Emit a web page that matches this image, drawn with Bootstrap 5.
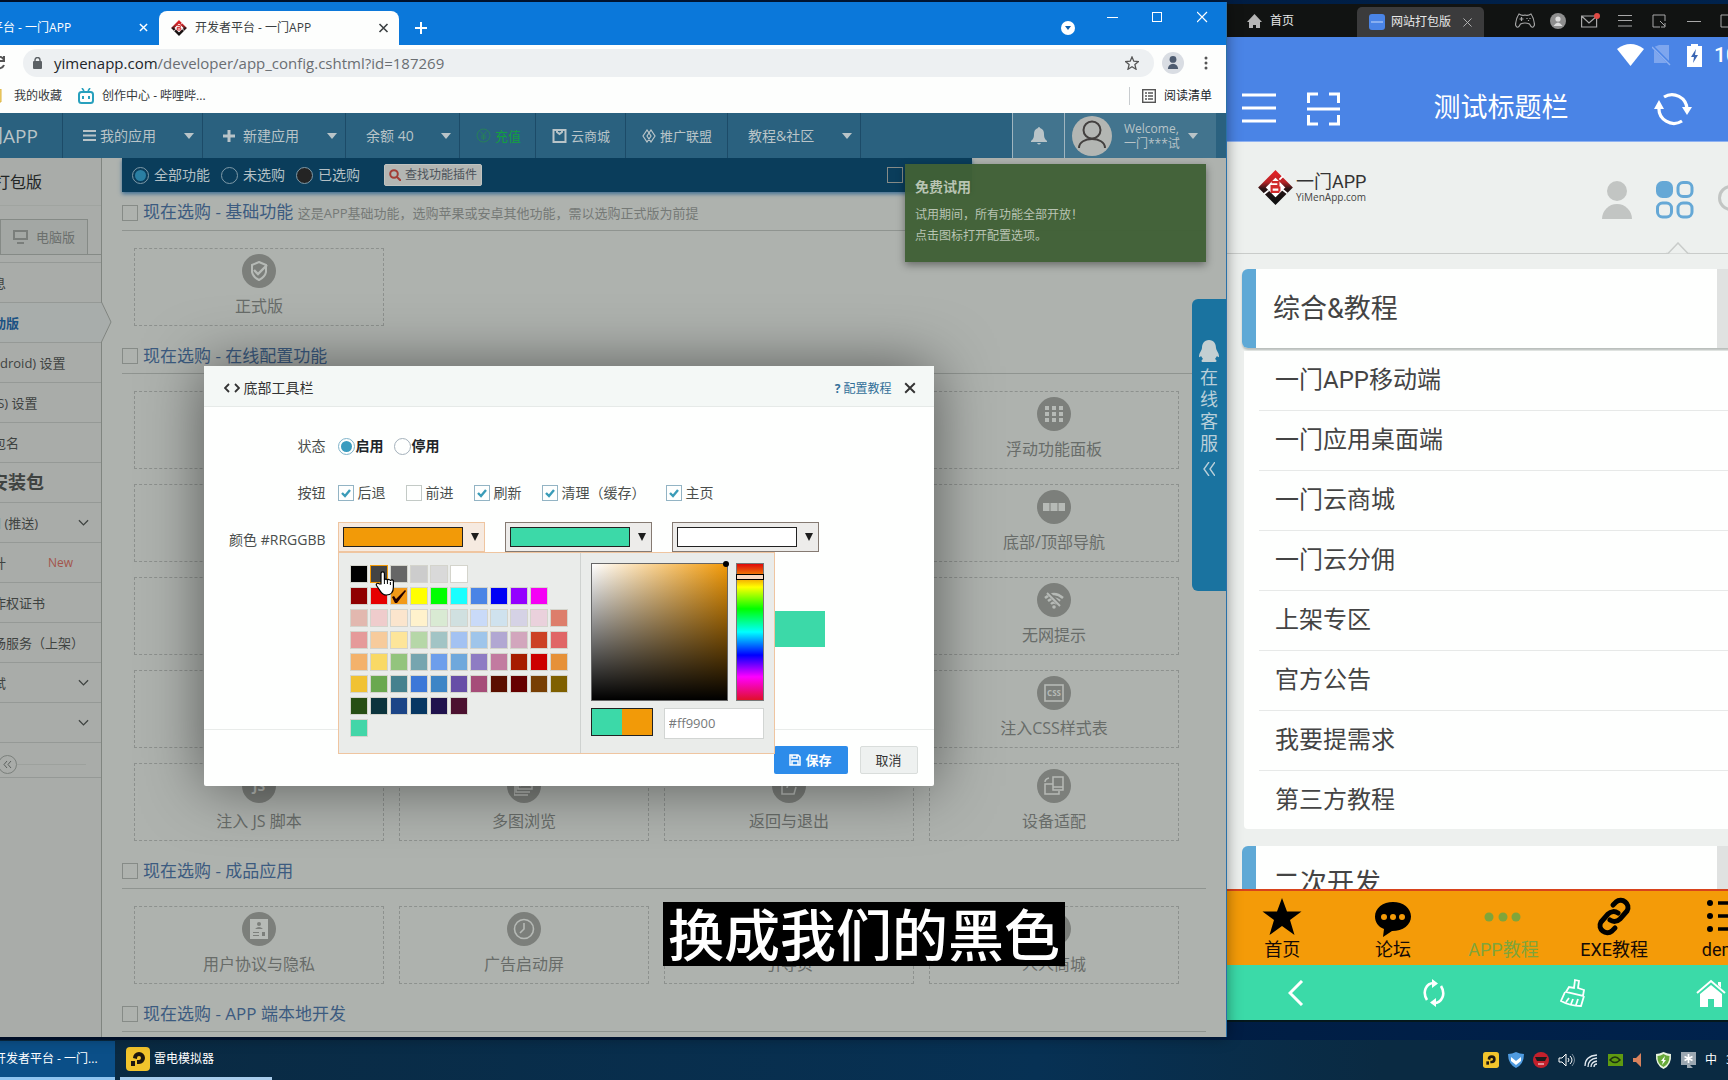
<!DOCTYPE html>
<html lang="zh-CN">
<head>
<meta charset="utf-8">
<meta name="viewport" content="width=device-width, initial-scale=1">
<title>开发者平台 - 一门APP</title>
<link rel="stylesheet" href="https://cdn.jsdelivr.net/npm/bootstrap@5.3.0/dist/css/bootstrap.min.css">
<style>
  :root { --ui: "Open Sans", "Noto Sans CJK SC", sans-serif; --phone: Roboto, "Noto Sans CJK SC", sans-serif; }
  body { font-family: var(--ui); font-size: 13px; line-height: 20px; background: #001b3c; overflow: hidden; height: 100vh; }
  button, input { font-family: inherit; }
  svg { display: block; flex: none; }
  a { text-decoration: none; color: inherit; }
  .desk { height: calc(100vh - 40px); padding: 2px 0 3px; background: linear-gradient(90deg, #001230, #00224c); }

  /* browser window */
  .win { position: relative; margin-left: -89px; box-shadow: 0 0 14px rgba(0,0,0,.4); z-index: 2; border-right: 1px solid #2a70a8; background: #fdfefd; min-width: 0; }
  .strip { height: 43px; background: #0b78da; padding-top: 9px; color: #fff; font-size: 12px; }
  .tab-old { width: 248px; padding: 0 11px 0 44px; }
  .tab-now { width: 240px; background: #fdfefd; color: #3a3f42; border-radius: 8px 8px 0 0; padding: 0 10px 0 12px; }
  .plain { border: 0; background: none; padding: 0; color: inherit; }
  .caps { align-self: flex-start; gap: 34px; padding: 0 18px 0 0; margin-top: -1px; }
  .addr-row { height: 35px; padding: 4px 14px 3px 84px; }
  .addr { background: #edf0f2; border-radius: 14px; height: 28px; padding: 0 15px 0 10px; gap: 12px; }
  .url { font-size: 15px; color: #6a6e72; border: 0; background: none; outline: 0; }
  .marks { height: 34px; font-size: 12px; color: #33373a; padding: 0 14px 0 79px; }
  .marks .read { border-left: 1px solid #c8cccf; padding-left: 12px; height: 18px; }

  .topnav { height: 45px; background: #2a617f; color: #b9c4c8; font-size: 14px; }
  .topnav > a, .topnav > .brand { border-right: 1px solid #1c4b68; height: 45px; }
  .brand { width: 152px; font-size: 19px; padding-left: 54px; }
  .caret { border: 5px solid transparent; border-top: 6px solid #b9c4c8; border-bottom: 0; }
  .sm13 { font-size: 13px; }
  .bell { width: 52px; background: #42748e; border-left: 1px solid #9fb5bf; }
  .user { width: 152px; background: #42748e; border-left: 1px solid #9fb5bf; padding-left: 7px; font-size: 12px; line-height: 15px; }

  .page { background: #aeb2ae; min-height: 0; overflow: hidden; }
  .side { width: 191px; background: #a9aca9; border-right: 1px solid #808580; color: #3f4341; flex: none; }
  .side-title { height: 48px; padding: 0 0 0 51px; font-size: 16px; color: #232625; border-bottom: 1px solid #a0a4a0; }
  .side-tabs { height: 49px; padding: 13px 13px 0 0; border-bottom: 1px solid #858a86; margin-bottom: 7px; }
  .side-tabs a { height: 35px; width: 88px; border: 1px solid #858a86; border-bottom: 0; font-size: 13px; color: #6b6f6d; background: #a3a7a4; }
  .side-list a, .side-list h6 { height: 40px; border-top: 1px solid #959996; padding: 0 12px 0 43px; margin: 0; white-space: nowrap; }
  .side-list h6 { font-size: 18px; font-weight: 700; }
  .side-list .on { position: relative; color: #1b5283; font-weight: 700; background: #a8adab; margin-right: -1px; }
  .side-list .on svg { position: absolute; right: -10px; top: -1px; }
  .fold { height: 36px; border-top: 1px solid #959996; border-bottom: 1px solid #959996; padding: 8px 15px 0 87px; }
  .fold hr { flex: 1; margin: 0; color: #7b807c; }
  .fold button { width: 19px; height: 19px; border: 1px solid #7b807c; border-radius: 50%; }

  .main { flex: 1; min-width: 0; padding: 0 20px; overflow: hidden; }
  .filter { height: 34px; background: #0a3d5b; margin-right: 234px; padding: 0 69px 0 10px; color: #b4c0c5; font-size: 14px; box-shadow: 0 2px 4px #3f6f94; }
  .dot { appearance: none; width: 17px; height: 17px; border: 1px solid #7f9aa8; border-radius: 50%; margin: 0 5px 0 0; padding: 0; background-clip: content-box; }
  .dot:checked { background-color: #2a7fa3; padding: 2px; }
  .dot.ink { background-color: #242424; background-clip: border-box; }
  .find { background: #b3b6b3; color: #4d535b; font-size: 12px; border: 1px solid #c0c3c0; border-radius: 2px; height: 22px; padding: 0 4px; }
  .sect-head { height: 27px; border-bottom: 1px solid #8f9490; font-size: 17px; color: #3c5b80; margin: 12px 0 17px; padding-bottom: 9px; }
  .sect-head small { font-size: 13px; color: #757976; }
  .box { appearance: none; width: 16px; height: 16px; border: 1px solid #868b87; margin: 0 5px 0 0; flex: none; }
  .tiles { display: grid; grid-template-columns: repeat(4, 1fr); gap: 15px; margin: 0 27px 21px 12px; }
  .tile { height: 78px; border: 1px dashed #8d918e; padding-top: 5px; font-size: 16px; line-height: 24px; color: #686c69; text-align: center; }
  .disc { width: 34px; height: 34px; border-radius: 50%; background: #7c7f7b; margin: 0 auto 6px; display: grid; place-items: center; color: #b6bab6; }

  .toast-green { position: absolute; right: 20px; top: 162px; width: 301px; height: 98px; background: rgba(64,96,54,.97); color: #b9c4b3; padding: 12px 10px; font-size: 12px; line-height: 21px; box-shadow: 0 3px 8px rgba(0,0,0,.4); }
  .toast-green b { font-size: 14px; display: block; margin-bottom: 7px; }
  .service { position: absolute; right: 0; top: 297px; width: 34px; height: 292px; background: #1a73a0; color: #b9cfd9; border-radius: 6px 0 0 6px; padding-top: 41px; font-size: 18px; line-height: 22px; }

  /* dialog */
  .dlg { position: absolute; left: 50%; margin-left: -365px; top: 364px; width: 730px; height: 420px; background: #fefffe; box-shadow: 0 0 60px rgba(0,0,0,.5); border-radius: 2px; color: #4a4e4c; font-size: 14px; }
  .dlg-head { height: 41px; background: #f4f8f6; border-bottom: 1px solid #e6eae8; padding: 3px 18px 0 20px; color: #333; }
  .help { font-size: 12px; color: #337099; padding-top: 2px; }
  .dlg-body { padding: 27px 0 0; flex: 1; }
  .frow { height: 24px; margin-bottom: 23px; }
  .frow.c { height: 30px; margin-bottom: 59px; margin-top: -6px; }
  .flabel { width: 122px; text-align: right; margin-right: 12px; flex: none; }
  .dlg .dot { border-color: #a4b1bb; margin-right: 1px; }
  .dlg .dot:checked { background-color: #3a9cbf; border-color: #7fb3ca; padding: 2px; }
  .dlg .box { border-color: #c3cac6; margin-right: 4px; }
  .dlg .box:checked { border-color: #93b4c4; background: url("data:image/svg+xml,%3Csvg xmlns='http://www.w3.org/2000/svg' viewBox='0 0 14 14'%3E%3Cpath d='M3 7l3 3 5-6' fill='none' stroke='%233a9cb8' stroke-width='2.4'/%3E%3C/svg%3E"); }
  .pick { width: 147px; height: 30px; border: 1px solid #857a72; background: #edecea; padding: 0 5px 0 4px; }
  .pick.open { border-color: #efc5a0; background: #f6eae0; }
  .pick i { width: 120px; height: 20px; border: 1px solid #222; }
  .pick u { border: 4px solid transparent; border-top: 8px solid #1d1d1d; border-bottom: 0; }
  .amber { background: #f29a08; } .mint { background: #3cd9a8; } .snow { background: #fff; }
  .strip-demo { height: 36px; width: 487px; margin-left: 134px; }
  .dlg-foot { height: 57px; border-top: 1px solid #e9ecea; padding: 4px 16px 0; }
  .dlg-foot .btn { font-size: 13px; height: 28px; padding: 0; border-radius: 2px; line-height: 18px; }
  .save { width: 74px; background: #2d8cea; color: #fff; font-weight: 600; }
  .cancel { width: 58px; background: #eef1f0; border: 1px solid #d9dddb; color: #333; }

  .pop { position: absolute; left: 134px; top: 186px; width: 437px; height: 202px; background: #eaecea; border: 1px solid #efc5a0; }
  .pal { width: 242px; padding: 12px 0 0 11px; border-right: 1px solid #cfd2d0; }
  .pal div { display: flex; gap: 2px; height: 18px; margin-bottom: 4px; }
  .pal button { width: 18px; height: 18px; border: 1px solid #d4d4cc; padding: 0; }
  .pal .hot { border-color: #f29a08; }
  .mix { padding: 10px; }
  .mix-foot { margin-top: 7px; }
  .sv { width: 137px; height: 138px; border: 1px solid #666; background: linear-gradient(to top, #000, transparent), linear-gradient(to right, #fff, #f29a08); position: relative; }
  .sv i { position: absolute; right: -2px; top: -3px; width: 6px; height: 6px; border-radius: 50%; background: #000; }
  .hue { width: 28px; height: 138px; border: 1px solid #777; position: relative; background: linear-gradient(#e00a0a, #ff0 17%, #0f0 33%, #0ff 50%, #00f 67%, #f0f 83%, #e0102a); }
  .hue i { position: absolute; left: -1px; top: 10px; width: 28px; height: 6px; background: #fbd9c0; border: 1px solid #000; }
  .duo { width: 62px; height: 28px; border: 1px solid #222; display: flex; }
  .duo i { flex: 1; }
  .hex { width: 100px; height: 31px; border: 1px solid #d2d5d3; background: #fff; font-size: 13px; color: #77797a; padding: 0 0 2px 4px; }
  .hand { position: absolute; left: 171px; top: 205px; }

  .caption { position: absolute; left: 663px; top: 902px; height: 64px; padding: 0 5px; background: #000; color: #fff; font: 500 56px/60px "Noto Sans CJK SC", sans-serif; z-index: 5; white-space: nowrap; }

  /* emulator */
  .emu { width: 501px; flex: none; overflow: hidden; margin-top: 2px; height: calc(100vh - 62px); background: #fff; font-family: var(--phone); border-bottom: 2px solid #04181c; }
  .emu-in { width: 553px; height: 100%; background: #edf0ee; }
  .emu-bar { height: 33px; background: #111312; color: #e8e8e8; font-family: var(--ui); font-size: 12px; flex: none; padding-left: 20px; }
  .emu-tab { width: 127px; height: 30px; background: #3b3b3c; border-radius: 5px 5px 0 0; margin: 0 31px 0 63px; padding: 0 12px 0 12px; gap: 6px; }
  .emu-tools { gap: 15px; color: #a8a8a8; }
  .status { height: 36px; background: #4a84e6; color: #fff; font-size: 21px; font-weight: 500; padding-left: 390px; flex: none; }
  .apphead { height: 69px; background: #4a84e6; color: #fff; padding: 3px 88px 0 15px; flex: none; border-bottom: 1px solid #8fb2f2; }
  .apphead h1 { font-size: 27px; font-weight: 400; margin: 0; padding-left: 8px; }
  .weblogo { height: 112px; padding: 0 32px 0 31px; border-bottom: 1px solid #c9ccca; flex: none; position: relative; }
  .notch { position: absolute; left: 439px; bottom: -1px; }
  .weblogo .site { padding-bottom: 20px; gap: 3px; }
  .weblogo b { font-size: 18px; line-height: 19px; font-weight: 400; color: #333; display: block; }
  .weblogo em { font: 10px/12px var(--ui); color: #444; display: block; }
  .card-hd { height: 79px; margin: 15px 0 0 15px; border-left: 14px solid #5fa9d6; border-radius: 6px 0 0 6px; font-size: 27px; color: #444; background: linear-gradient(90deg, #fefffe 461px, #e0e2e1 461px); padding-left: 17px; box-shadow: 0 2px 2px #b9bdba; flex: none; }
  .card-hd.two { margin-top: 17px; flex: 1 1 0; min-height: 0; overflow: hidden; align-items: flex-start; padding-top: 18px; line-height: 40px; box-shadow: none; border-radius: 6px 0 0 0; }
  .links { background: #fefffe; margin: 3px 0 0 17px; padding-left: 15px; border-radius: 0 0 0 4px; flex: none; font-size: 24px; color: #444; }
  .links a { display: block; height: 60px; line-height: 59px; border-bottom: 1px solid #e7e9e8; padding-left: 16px; }
  .links a:last-child { border: 0; height: 58px; }
  .nav5 { height: 76px; background: #f49b08; border-top: 2px solid #d8431c; flex: none; color: #140a06; font-size: 18px; line-height: 22px; }
  .nav5 a { flex: 1 1 0; text-align: center; padding-top: 6px; }
  .nav5 svg { margin: 0 auto 2px; }
  .nav4 { height: 55px; background: #3bdaa8; flex: none; color: #fff; }
  .nav4 a { flex: 1 1 0; display: grid; place-items: center; }

  .task { height: 40px; color: #fff; font-size: 12px; background: linear-gradient(90deg, #0a2940, #073154 60%, #0a2a42 80%); }
  .task .cur { width: 115px; height: 39px; background: #0b4f88; border-bottom: 3px solid #8fc4f0; overflow: hidden; white-space: nowrap; padding-left: 0; }
  .task .run { width: 152px; height: 39px; border-bottom: 3px solid #a9cdec; margin-left: 5px; padding-left: 6px; }
  .cur span { margin-left: -6px; }
  .tray { gap: 9px; width: 254px; overflow: hidden; flex: none; }
</style>
</head>
<body>
<svg width="0" height="0" class="position-absolute">
  <defs>
    <linearGradient id="rk" x1="0" y1="0" x2="0" y2="1"><stop offset="0" stop-color="#dc2226"/><stop offset=".3" stop-color="#b82427"/><stop offset=".55" stop-color="#2a1516"/><stop offset="1" stop-color="#101010"/></linearGradient>
    <symbol id="logo" viewBox="0 0 36 36"><path d="M18 4L32 18 18 32 4 18z" fill="#fff" stroke="url(#rk)" stroke-width="5.500"/><path d="M26 6l-4 4M6 25l5-4M30 24l-5-4" stroke="#fff" stroke-width="1.800"/><path d="M14 12.500h7v4h-7v6h8M14 18h8v4" fill="none" stroke="#d12a2c" stroke-width="2.200"/></symbol>
    <symbol id="x" viewBox="0 0 10 10"><path d="M1 1l8 8M9 1L1 9" stroke="currentColor" stroke-width="1.600"/></symbol>
    <symbol id="xt" viewBox="0 0 10 10"><path d="M.5.5l9 9M9.500.5l-9 9" stroke="currentColor" stroke-width="1"/></symbol>
    <symbol id="person" viewBox="0 0 30 38"><circle cx="15" cy="10" r="10" fill="currentColor"/><path d="M0 38a15 15 0 0130 0z" fill="currentColor"/></symbol>
    <symbol id="chev" viewBox="0 0 12 8"><path d="M1 1l5 5 5-5" fill="none" stroke="currentColor" stroke-width="1.400"/></symbol>
    <symbol id="ld" viewBox="0 0 24 24"><rect width="24" height="24" rx="4" fill="#f2c42c"/><path d="M7 11a6 6 0 116 6h-2v-4h2a2 2 0 10-2-2v1z" fill="#1d1710"/><path d="M5 14h4v5H5z" fill="#1d1710"/></symbol>
  </defs>
</svg>

<div class="desk d-flex">
  <!-- browser -->
  <div class="win d-flex flex-column flex-fill">
    <div class="strip d-flex">
      <div class="tab-old d-flex align-items-center justify-content-between"><span>开发者平台 - 一门APP</span><button class="plain" aria-label="关闭"><svg width="9" height="9"><use href="#x"/></svg></button></div>
      <div class="tab-now d-flex align-items-center"><svg width="16" height="16" class="me-2"><use href="#logo"/></svg><span class="flex-fill">开发者平台 - 一门APP</span><button class="plain" aria-label="关闭"><svg width="11" height="10"><use href="#x"/></svg></button></div>
      <button class="plain ms-3" aria-label="新标签页"><svg width="12" height="12" viewBox="0 0 12 12"><path d="M6 0v12M0 6h12" stroke="#fff" stroke-width="2"/></svg></button>
      <svg class="ms-auto me-4 align-self-center" width="14" height="14" viewBox="0 0 14 14"><circle cx="7" cy="7" r="7" fill="#fff"/><path d="M4 5h6l-3 4z" fill="#0b5fb0"/></svg>
      <div class="caps d-flex">
        <svg class="ms-2" width="11" height="14" viewBox="0 0 11 14"><path d="M0 7.500h11" stroke="#fff"/></svg>
        <svg width="11" height="14" viewBox="0 0 11 14"><rect x=".5" y="2.500" width="9" height="9" fill="none" stroke="#fff"/></svg>
        <svg width="11" height="14" viewBox="0 0 11 14"><path d="M0 2l10 10M10 2L0 12" stroke="#fff" stroke-width="1.200"/></svg>
      </div>
    </div>
    <div class="addr-row d-flex align-items-center">
      <svg width="12" height="14" viewBox="0 0 12 14" class="me-3"><path d="M1 2a5 5 0 018 2M9 0v5H4M9 9a5 5 0 01-8 2" fill="none" stroke="#555" stroke-width="2"/></svg>
      <div class="addr d-flex align-items-center flex-fill">
        <svg width="9" height="12" viewBox="0 0 9 12"><rect y="4" width="9" height="8" rx="1" fill="#5b6064"/><path d="M2 5V3a2.500 2.500 0 015 0v2" fill="none" stroke="#5b6064" stroke-width="1.400"/></svg>
        <div class="url flex-fill"><span class="text-dark">yimenapp.com</span>/developer/app_config.cshtml?id=187269</div>
        <svg width="14" height="14" viewBox="0 0 14 14"><path d="M7 1l1.800 4.200 4.700.4-3.600 3 1.100 4.600L7 10.800l-4 2.400 1.100-4.600-3.600-3 4.700-.4z" fill="none" stroke="#555" stroke-width="1.300"/></svg>
      </div>
      <div class="rounded-circle ms-2 me-3 d-grid" style="width:22px;height:22px;background:#d9dde3;place-items:center;color:#4d5b70"><svg width="12" height="13"><use href="#person"/></svg></div>
      <svg width="4" height="14" viewBox="0 0 4 14" fill="#555" class="ms-1 me-1"><circle cx="2" cy="2" r="1.500"/><circle cx="2" cy="7" r="1.500"/><circle cx="2" cy="12" r="1.500"/></svg>
    </div>
    <div class="marks d-flex align-items-center">
      <svg width="12" height="14" viewBox="0 0 12 14"><path d="M0 0h11v13H0z" fill="#f3d675" stroke="#dcb23f"/></svg>
      <a href="#" class="ms-2 ps-1">我的收藏</a>
      <svg class="ms-3 me-2" width="16" height="16" viewBox="0 0 16 16"><path d="M4 0l2 3M12 0l-2 3" stroke="#27a0bd" stroke-width="1.600"/><rect x="1" y="4" width="14" height="11" rx="2.500" fill="none" stroke="#27a0bd" stroke-width="2"/><path d="M5 8v3M11 8v3" stroke="#27a0bd" stroke-width="2"/></svg>
      <a href="#">创作中心 - 哔哩哔...</a>
      <a href="#" class="read ms-auto d-flex align-items-center text-dark"><svg class="me-2" width="14" height="14" viewBox="0 0 14 14"><rect x=".7" y=".7" width="12.600" height="12.600" fill="none" stroke="#555" stroke-width="1.400"/><path d="M3 4h2M6 4h5M3 7h2M6 7h5M3 10h2M6 10h5" stroke="#555" stroke-width="1.400"/></svg>阅读清单</a>
    </div>

    <nav class="topnav d-flex align-items-center">
      <div class="brand d-flex align-items-center">一门APP</div>
      <a href="#" class="d-flex align-items-center" style="width:140px;padding:0 8px 0 20px"><svg width="13" height="13" viewBox="0 0 13 13" class="me-1"><path d="M0 2h13M0 6.500h13M0 11h13" stroke="currentColor" stroke-width="2"/></svg>我的应用<i class="caret ms-auto"></i></a>
      <a href="#" class="d-flex align-items-center" style="width:143px;padding:0 8px 0 20px"><svg width="12" height="12" viewBox="0 0 12 12" class="me-2"><path d="M6 0v12M0 6h12" stroke="currentColor" stroke-width="3"/></svg>新建应用<i class="caret ms-auto"></i></a>
      <a href="#" class="d-flex align-items-center" style="width:114px;padding:0 8px 0 20px">余额 40<i class="caret ms-auto"></i></a>
      <a href="#" class="d-flex align-items-center sm13" style="width:76px;padding-left:16px;color:#12a040"><svg width="15" height="15" viewBox="0 0 15 15" class="me-1"><circle cx="7.500" cy="7.500" r="6.500" fill="none" stroke="#27805a"/><path d="M4.500 3.500l3 3.500 3-3.500M7.500 7v5M5 8h5M5 10h5" fill="none" stroke="#27805a"/></svg>充值</a>
      <a href="#" class="d-flex align-items-center sm13" style="width:90px;padding-left:16px"><svg width="15" height="15" viewBox="0 0 15 15" class="me-1"><path d="M1.500 2h12v12h-12zM5 2v2l2.500 2L10 4V2" fill="none" stroke="currentColor" stroke-width="2"/></svg>云商城</a>
      <a href="#" class="d-flex align-items-center sm13" style="width:102px;padding-left:16px"><svg width="14" height="14" viewBox="0 0 14 14" class="me-1"><path d="M5 1L1 7l4 6 4-6zM9 1l4 6-4 6-4-6z" fill="none" stroke="currentColor" stroke-width="1.200"/></svg>推广联盟</a>
      <a href="#" class="d-flex align-items-center" style="width:133px;padding:0 8px 0 20px">教程&amp;社区<i class="caret ms-auto"></i></a>
      <a href="#" class="bell ms-auto d-grid border-end-0" style="place-items:center" aria-label="通知"><svg width="16" height="18" viewBox="0 0 16 18"><path d="M8 0c1 0 1 1 1 1 3 1 4 3 4 6 0 4 1 5 3 7v1H0v-1c2-2 3-3 3-7 0-3 1-5 4-6 0 0 0-1 1-1zM6 16h4q-2 3-4 0z" fill="#b9c4c8"/></svg></a>
      <a href="#" class="user d-flex align-items-center border-end-0"><svg width="40" height="40" viewBox="0 0 40 40" class="me-2"><circle cx="20" cy="20" r="20" fill="#b3b6b3"/><circle cx="20" cy="14" r="8.500" fill="none" stroke="#43403f" stroke-width="2"/><path d="M7 32c0-12 26-12 26 0" fill="none" stroke="#43403f" stroke-width="2"/></svg><span class="ms-1">Welcome,<br>一门***试</span><i class="caret ms-2"></i></a>
      <span style="width:10px"></span>
    </nav>

    <div class="page d-flex flex-fill">
      <aside class="side">
        <div class="side-title d-flex align-items-center">网站打包版</div>
        <div class="side-tabs d-flex justify-content-end"><a href="#" class="d-flex align-items-center justify-content-center"><svg width="15" height="14" viewBox="0 0 15 14" class="me-2"><path d="M0 0h15v10H0z" fill="#7a7e7b"/><path d="M2 2h11v6H2z" fill="#a3a7a4"/><path d="M4 12h7v2H4z" fill="#7a7e7b"/></svg>电脑版</a></div>
        <div class="side-list">
          <a href="#" class="d-flex align-items-center">基本信息</a>
          <a href="#" class="d-flex align-items-center on">配置移动版<svg width="11" height="40" viewBox="0 0 11 40"><path d="M0 .5L10 20 0 39.500z" fill="#a8adab"/><path d="M.5 0L10 20 .5 40" fill="none" stroke="#808580"/></svg></a>
          <a href="#" class="d-flex align-items-center">安卓(Android) 设置</a>
          <a href="#" class="d-flex align-items-center">苹果(iOS) 设置</a>
          <a href="#" class="d-flex align-items-center">证书、包名</a>
          <h6 class="d-flex align-items-center">生成安装包</h6>
          <a href="#" class="d-flex align-items-center justify-content-between" style="padding-left:38px">消息通知 (推送)<svg width="11" height="8"><use href="#chev"/></svg></a>
          <a href="#" class="d-flex align-items-center">数据统计<span class="ms-auto me-3" style="color:#a3544b;font-size:12px">New</span></a>
          <a href="#" class="d-flex align-items-center">软件著作权证书</a>
          <a href="#" class="d-flex align-items-center">应用市场服务（上架）</a>
          <a href="#" class="d-flex align-items-center justify-content-between">真机调试<svg width="11" height="8"><use href="#chev"/></svg></a>
          <a href="#" class="d-flex align-items-center justify-content-end" aria-label="更多"><svg width="11" height="8"><use href="#chev"/></svg></a>
        </div>
        <div class="fold d-flex align-items-center"><button class="plain d-grid" style="place-items:center" aria-label="收起"><svg width="9" height="9" viewBox="0 0 9 9"><path d="M4 1L1 4.500 4 8M8 1L5 4.500 8 8" fill="none" stroke="#5b605d"/></svg></button><hr></div>
      </aside>

      <main class="main">
        <div class="filter d-flex align-items-center">
          <input class="dot" type="radio" name="f" id="f1" checked><label for="f1">全部功能</label>
          <input class="dot" style="margin-left:11px" type="radio" name="f" id="f2"><label for="f2">未选购</label>
          <input class="dot ink" style="margin-left:11px" type="radio" name="f" id="f3"><label for="f3">已选购</label>
          <button class="find d-flex align-items-center ms-4"><svg width="12" height="12" viewBox="0 0 12 12" class="me-1"><circle cx="5" cy="5" r="3.800" fill="none" stroke="#a33d36" stroke-width="2"/><path d="M8 8l4 4" stroke="#a33d36" stroke-width="2"/></svg>查找功能插件</button>
          <input class="box ms-auto me-0" type="checkbox" aria-label="免费">
        </div>
        <div class="sect-head d-flex align-items-center"><input class="box" type="checkbox" id="s1"><label for="s1">现在选购 - 基础功能 <small>这是APP基础功能，选购苹果或安卓其他功能，需以选购正式版为前提</small></label></div>
        <div class="tiles"><div class="tile"><div class="disc"><svg width="20" height="20" viewBox="0 0 20 20"><path d="M10 1l7 3v7q-1 5-7 8-6-3-7-8V4z" fill="none" stroke="currentColor" stroke-width="2"/><path d="M5 9l4 4 9-9" fill="none" stroke="currentColor" stroke-width="2.400"/></svg></div>正式版</div></div>

        <div class="sect-head d-flex align-items-center"><input class="box" type="checkbox" id="s2"><label for="s2">现在选购 - 在线配置功能</label></div>
        <div class="tiles">
          <div class="tile"></div><div class="tile"></div><div class="tile"></div>
          <div class="tile"><div class="disc"><svg width="18" height="16" viewBox="0 0 18 16" fill="currentColor"><path d="M0 0h4v4H0zM7 0h4v4H7zM14 0h4v4h-4zM0 6h4v4H0zM7 6h4v4H7zM14 6h4v4h-4zM0 12h4v4H0zM7 12h4v4H7zM14 12h4v4h-4z"/></svg></div>浮动功能面板</div>
          <div class="tile"></div><div class="tile"></div><div class="tile"></div>
          <div class="tile"><div class="disc"><svg width="22" height="8" viewBox="0 0 22 8" fill="currentColor"><path d="M0 0h6.500v8H0zM7.500 0h7v8h-7zM15.500 0H22v8h-6.500z"/></svg></div>底部/顶部导航</div>
          <div class="tile"></div><div class="tile"></div><div class="tile"></div>
          <div class="tile"><div class="disc"><svg width="20" height="18" viewBox="0 0 20 18"><path d="M1 7q9-8 18 0M4 10q6-5 12 0M7 13q3-3 6 0" fill="none" stroke="currentColor" stroke-width="2.400"/><circle cx="10" cy="16" r="1.800" fill="currentColor"/><path d="M3 1l14 14" stroke="#7c7f7b" stroke-width="4"/><path d="M3 2l13 13" stroke="currentColor" stroke-width="2"/></svg></div>无网提示</div>
          <div class="tile"></div><div class="tile"></div><div class="tile"></div>
          <div class="tile"><div class="disc"><svg width="20" height="18" viewBox="0 0 20 18"><rect x="1" y="1" width="18" height="16" fill="none" stroke="currentColor" stroke-width="1.600"/><text x="10" y="12" text-anchor="middle" font-size="8" font-weight="700" fill="currentColor">CSS</text></svg></div>注入CSS样式表</div>
          <div class="tile"><div class="disc"><svg width="22" height="20" viewBox="0 0 22 20"><text x="11" y="15" text-anchor="middle" font-size="14" font-weight="700" fill="currentColor">JS</text></svg></div>注入 JS 脚本</div>
          <div class="tile"><div class="disc"><svg width="20" height="20" viewBox="0 0 20 20" fill="none" stroke="currentColor" stroke-width="1.500"><path d="M4 2h14v11H4zM6 10l4-4 3 3 2-2 2 3M2 5v11h14M0 8v11h14"/></svg></div>多图浏览</div>
          <div class="tile"><div class="disc"><svg width="20" height="20" viewBox="0 0 20 20" fill="none" stroke="currentColor" stroke-width="1.600"><path d="M10 4H3v14h12l2-7M8 12q1-7 10-7M14 1l5 4-5 4"/></svg></div>返回与退出</div>
          <div class="tile"><div class="disc"><svg width="20" height="20" viewBox="0 0 20 20" fill="none" stroke="currentColor" stroke-width="1.500"><path d="M9 1h10v13H9zM9 11h10M9 8H1v10h14v-3M1 6q0-3 4-4"/></svg></div>设备适配</div>
        </div>

        <div class="sect-head d-flex align-items-center"><input class="box" type="checkbox" id="s3"><label for="s3">现在选购 - 成品应用</label></div>
        <div class="tiles">
          <div class="tile"><div class="disc"><svg width="18" height="20" viewBox="0 0 18 20"><path d="M0 0h18v20H0z" fill="currentColor"/><circle cx="9" cy="5" r="2" fill="#7c7f7b"/><path d="M5 10q4-4 8 0zM3 13h6v1H3zM3 16h6v1H3zM12 13h3v4h-3z" fill="#7c7f7b"/></svg></div>用户协议与隐私</div>
          <div class="tile"><div class="disc"><svg width="22" height="22" viewBox="0 0 22 22" fill="none" stroke="currentColor" stroke-width="1.600"><circle cx="11" cy="11" r="9.500"/><path d="M11 5v6l-4 4"/></svg></div>广告启动屏</div>
          <div class="tile"><div class="disc"></div>引导页</div>
          <div class="tile"><div class="disc"></div>人人商城</div>
        </div>

        <div class="sect-head d-flex align-items-center"><input class="box" type="checkbox" id="s4"><label for="s4">现在选购 - APP 端本地开发</label></div>
      </main>
    </div>

    <div class="toast-green"><b>免费试用</b>试用期间，所有功能全部开放！<br>点击图标打开配置选项。</div>
    <a href="#" class="service d-flex flex-column align-items-center"><svg width="20" height="22" viewBox="0 0 20 22" class="mb-1"><path d="M10 0c5 0 7 4 7 8 0 2 3 5 3 8 0 2-1 1-2 0l-2 3c2 1 2 3 0 3H4c-2 0-2-2 0-3l-2-3c-1 1-2 2-2 0 0-3 3-6 3-8 0-4 2-8 7-8z" fill="#c3cfd2"/></svg><span>在</span><span>线</span><span>客</span><span>服</span><svg width="12" height="14" viewBox="0 0 12 14" class="mt-2"><path d="M6 0L1 7l5 7M12 0L7 7l5 7" fill="none" stroke="currentColor" stroke-width="1.400"/></svg></a>

    <!-- toolbar settings dialog -->
    <form class="dlg d-flex flex-column" role="dialog" aria-label="底部工具栏">
      <div class="dlg-head d-flex align-items-center">
        <svg width="16" height="10" viewBox="0 0 16 10" class="me-1"><path d="M5 1L1 5l4 4M11 1l4 4-4 4" fill="none" stroke="#333" stroke-width="1.800"/></svg><span>底部工具栏</span>
        <a href="#" class="help ms-auto"><b>?</b> 配置教程</a>
        <button type="button" class="plain ms-2 ps-1" aria-label="关闭"><svg width="12" height="12"><use href="#x"/></svg></button>
      </div>
      <div class="dlg-body">
        <div class="frow d-flex align-items-center"><span class="flabel">状态</span><input class="dot" type="radio" name="st" id="st1" checked><label for="st1" class="fw-semibold text-dark">启用</label><input class="dot" style="margin-left:10px" type="radio" name="st" id="st2"><label for="st2" class="fw-semibold text-dark">停用</label></div>
        <div class="frow d-flex align-items-center"><span class="flabel">按钮</span>
          <input class="box" type="checkbox" id="b1" checked><label for="b1" class="me-3 pe-1">后退</label>
          <input class="box" type="checkbox" id="b2"><label for="b2" class="me-3 pe-1">前进</label>
          <input class="box" type="checkbox" id="b3" checked><label for="b3" class="me-3 pe-1">刷新</label>
          <input class="box" type="checkbox" id="b4" checked><label for="b4" class="me-3 pe-1">清理（缓存）</label>
          <input class="box" type="checkbox" id="b5" checked><label for="b5">主页</label>
        </div>
        <div class="frow c d-flex"><span class="flabel pt-2">颜色 #RRGGBB</span>
          <div class="d-flex" style="gap:20px">
            <button type="button" class="pick open d-flex align-items-center justify-content-between" aria-label="背景颜色"><i class="amber"></i><u></u></button>
            <button type="button" class="pick d-flex align-items-center justify-content-between" aria-label="选中颜色"><i class="mint"></i><u></u></button>
            <button type="button" class="pick d-flex align-items-center justify-content-between" aria-label="图标颜色"><i class="snow"></i><u></u></button>
          </div>
        </div>
        <div class="strip-demo mint"></div>
      </div>
      <div class="dlg-foot d-flex align-items-center justify-content-end">
        <button type="button" class="btn save d-flex align-items-center justify-content-center"><svg width="12" height="12" viewBox="0 0 12 12" class="me-1"><path d="M1 1h8l2 2v8H1zM3 1v3h5V1M3 11V7h6v4" fill="none" stroke="#fff" stroke-width="1.500"/></svg>保存</button>
        <button type="button" class="btn cancel" style="margin-left:12px">取消</button>
      </div>
      <div class="pop d-flex">
        <div class="pal" id="pal"></div>
        <div class="mix flex-fill">
          <div class="d-flex justify-content-between"><div class="sv"><i></i></div><div class="hue"><i></i></div></div>
          <div class="mix-foot d-flex justify-content-between"><div class="duo"><i class="mint"></i><i class="amber"></i></div><input class="hex" value="#ff9900" aria-label="颜色值"></div>
        </div>
      </div>
      <svg class="hand" width="20" height="25" viewBox="0 0 20 25"><path d="M6 13V2.500a1.700 1.700 0 013.400 0V9a1.600 1.600 0 013 .3 1.600 1.600 0 013 .6 1.500 1.500 0 013 1V16c0 5-2 8-7 8-4 0-5-2-6.500-4.500L1.500 14.500c-1-2 1.500-3 3-1.500z" fill="#fff" stroke="#000" stroke-width="1.200"/><path d="M9.400 9v4M12.400 10v3M15.400 11v3" stroke="#000"/></svg>
    </form>
  </div>

  <!-- emulator -->
  <div class="emu">
    <div class="emu-in d-flex flex-column">
      <div class="emu-bar d-flex align-items-center">
        <svg width="15" height="14" viewBox="0 0 15 14" class="me-2"><path d="M7.500 0L15 8h-2v6H9v-3H6v3H2V8H0z" fill="#b5b5b5"/></svg><span>首页</span>
        <div class="emu-tab d-flex align-items-center align-self-end"><svg width="16" height="16" viewBox="0 0 16 16"><rect width="16" height="16" rx="3" fill="#4a84e6"/><path d="M2 8h12" stroke="#9dbcf3" stroke-width="1.500"/></svg><span class="flex-fill">网站打包版</span><svg width="9" height="9" class="opacity-75"><use href="#xt"/></svg></div>
        <div class="emu-tools d-flex align-items-center">
          <svg width="20" height="16" viewBox="0 0 20 16" fill="none" stroke="currentColor" stroke-width="1.200"><path d="M4 1q3 2 6 1 3 1 6-1 3 4 3.500 11-2 5-5-1-4.500-2-9 0-3 6-5 1Q1 5 4 1zM4.500 6h4M6.500 4v4M12 5v1M15 5v1M13.500 7v1"/></svg>
          <svg width="16" height="16" viewBox="0 0 16 16"><circle cx="8" cy="8" r="8" fill="#8e8e8e"/><circle cx="8" cy="6" r="2.600" fill="#ddd"/><path d="M3.500 13q4.500-7 9 0z" fill="#ddd"/></svg>
          <svg width="19" height="16" viewBox="0 0 19 16"><path d="M.6 3h15v11H.6zM.6 3L8 10l8-7" fill="none" stroke="currentColor" stroke-width="1.200"/><circle cx="16" cy="3" r="3" fill="#e04b45"/></svg>
          <svg width="20" height="14" viewBox="0 0 20 14"><path d="M3 1.500h14M3 6.500h14M3 12h14" stroke="currentColor"/></svg>
          <svg width="18" height="14" viewBox="0 0 18 14"><path d="M10 13H3V1h12v6M10 7l5 5M15 9v4h-4" fill="none" stroke="currentColor"/></svg>
          <svg width="20" height="14" viewBox="0 0 20 14"><path d="M4 7.500h14" stroke="currentColor"/></svg>
          <svg width="14" height="14" viewBox="0 0 14 14"><path d="M3 1h11v12H3z" fill="none" stroke="currentColor"/></svg>
        </div>
      </div>
      <div class="status d-flex align-items-center">
        <svg width="27" height="22" viewBox="0 0 27 22"><path d="M0 5q13.500-10 27 0L13.500 22z" fill="#fff"/></svg>
        <svg width="21" height="22" viewBox="0 0 21 22" class="ms-2"><path d="M2 3l5-2h10v18H2z" fill="#7ea6ee"/><path d="M0 2l19 19" stroke="#4a84e6" stroke-width="3"/><path d="M0 3l18 18" stroke="#8db0f0" stroke-width="1.500"/></svg>
        <svg width="15" height="23" viewBox="0 0 15 23" class="me-2" style="margin-left:14px"><path d="M0 2h4V0h7v2h4v21H0z" fill="#fff"/><path d="M9 5l-5 8h3l-1 6 5-8H8z" fill="#3a66b4"/></svg>
        <span class="ms-1">10:22</span>
      </div>
      <div class="apphead d-flex align-items-center justify-content-between">
        <div class="d-flex"><svg width="34" height="32" viewBox="0 0 34 32" class="me-4"><path d="M0 3h34M0 16h34M0 29h34" stroke="#fff" stroke-width="3"/></svg><svg width="40" height="34" viewBox="-7 0 40 34"><path d="M1.500 11V2H11M22 2h9.500v9M1.500 23v9H11M22 32h9.500v-9M0 17h33" fill="none" stroke="#fff" stroke-width="3"/></svg></div>
        <h1>测试标题栏</h1>
        <svg width="38" height="34" viewBox="0 0 38 34"><path d="M10 5a15 15 0 0123 12M28 29A15 15 0 015 15" fill="none" stroke="#fff" stroke-width="3.200"/><path d="M28 15h10l-5 8zM0 17h10L5 8z" fill="#fff"/></svg>
      </div>
      <div class="weblogo d-flex align-items-center">
        <div class="site d-flex align-items-center"><svg width="35" height="37"><use href="#logo"/></svg>
        <div><b>一门APP</b><em>YiMenApp.com</em></div></div>
        <div class="d-flex ms-auto align-items-center pt-1" style="gap:24px;color:#c2c5c3">
          <svg width="30" height="38"><use href="#person"/></svg>
          <svg width="38" height="38" viewBox="0 0 38 38" fill="none" stroke="#65a8d6" stroke-width="3"><rect x="1.500" y="1.500" width="14" height="14" rx="5" fill="#65a8d6"/><rect x="22" y="1.500" width="14" height="14" rx="5"/><rect x="1.500" y="22" width="14" height="14" rx="5"/><rect x="22" y="22" width="14" height="14" rx="5"/></svg>
          <svg width="30" height="34" viewBox="0 0 30 34"><circle cx="13" cy="15" r="11.500" fill="none" stroke="#c2c5c3" stroke-width="3"/></svg>
        </div>
        <svg class="notch" width="24" height="12" viewBox="0 0 24 12"><path d="M0 11.500h2L12 1l10 10.500h2z" fill="#edf0ee"/><path d="M0 11.500h2L12 1l10 10.500h2" fill="none" stroke="#c9ccca" stroke-width="1.500"/></svg>
      </div>
      <div class="card-hd d-flex align-items-center">综合&amp;教程</div>
      <div class="links">
        <a href="#">一门APP移动端</a><a href="#">一门应用桌面端</a><a href="#">一门云商城</a><a href="#">一门云分佣</a><a href="#">上架专区</a><a href="#">官方公告</a><a href="#">我要提需求</a><a href="#">第三方教程</a>
      </div>
      <div class="card-hd two d-flex">二次开发</div>
      <div class="nav5 d-flex">
        <a href="#"><svg width="40" height="40" viewBox="0 0 40 40"><path d="M20 1l5 13.500h14.500L28 23l4.500 15L20 29 7.500 38 12 23 .5 14.500H15z" fill="#000"/></svg>首页</a>
        <a href="#"><svg width="38" height="40" viewBox="0 0 38 40"><path d="M19 5c10 0 18 6 18 14.500S29 34 18 34l-9 6 1-8C4 30 1 25 1 19.500 1 11 9 5 19 5z" fill="#000"/><circle cx="10" cy="20" r="3" fill="#f49b08"/><circle cx="19" cy="20" r="3" fill="#f49b08"/><circle cx="28" cy="20" r="3" fill="#f49b08"/></svg>论坛</a>
        <a href="#" style="color:#7fa53a"><svg width="38" height="40" viewBox="0 0 38 40" fill="currentColor"><circle cx="5" cy="20" r="4.500"/><circle cx="19" cy="20" r="4.500"/><circle cx="32" cy="20" r="4.500"/></svg>APP教程</a>
        <a href="#"><svg width="38" height="40" viewBox="0 0 38 40" fill="none" stroke="#000" stroke-width="5" stroke-linecap="round"><path d="M18 8l3-3c6-5 15 2 11 9l-7 8c-3 3-7 3-10 1"/><path d="M20 31l-3 3c-6 5-15-2-11-9l7-8c3-3 7-3 10-1"/></svg>EXE教程</a>
        <a href="#"><svg width="40" height="40" viewBox="0 0 40 40"><g fill="#000"><circle cx="5" cy="6" r="3"/><circle cx="5" cy="19" r="3"/><circle cx="5" cy="32" r="3"/></g><path d="M13 6h26M13 19h26M13 32h26" stroke="#000" stroke-width="3.500"/></svg>demo</a>
      </div>
      <div class="nav4 d-flex">
        <a href="#" aria-label="后退"><svg width="16" height="26" viewBox="0 0 16 26"><path d="M14 1L2 13l12 12" fill="none" stroke="#fff" stroke-width="3"/></svg></a>
        <a href="#" aria-label="刷新"><svg width="22" height="28" viewBox="0 0 22 28"><path d="M11 4C3 4-1 13 4 21M11 24c8 0 12-9 7-17" fill="none" stroke="#fff" stroke-width="2.600"/><path d="M9 0l6 4.500L9 9zM13 19l-6 4.500 6 4.500z" fill="#fff"/></svg></a>
        <a href="#" aria-label="清理"><svg width="26" height="28" viewBox="0 0 26 28" fill="none" stroke="#fff" stroke-width="1.800"><path d="M15 1l4 1-1 7 6 2-1 6L6 13l3-5 5 1zM5 13L1 22q9 5 20 5l3-10M6 23l3-4M11 25l2-5M16 26l2-6"/></svg></a>
        <a href="#" aria-label="主页"><svg width="30" height="28" viewBox="0 0 30 28"><path d="M1 14L15 2l14 12" fill="none" stroke="#fff" stroke-width="2"/><path d="M22 3h3v6l-3-3zM4 15L15 6l11 9v13h-8v-8h-6v8H4z" fill="#fff"/></svg></a>
      </div>
    </div>
  </div>
</div>

<div class="task d-flex align-items-end">
  <button class="plain cur text-start"><span>开发者平台 - 一门...</span></button>
  <button class="plain run d-flex align-items-center"><svg width="24" height="24" class="me-1"><use href="#ld"/></svg>雷电模拟器</button>
  <div class="tray ms-auto d-flex align-items-center h-100">
    <span></span><svg width="16" height="16"><use href="#ld"/></svg>
    <svg width="16" height="16" viewBox="0 0 16 16"><path d="M8 0q4 2 8 2 0 10-8 14Q0 12 0 2q4 0 8-2z" fill="#4f9be0"/><path d="M3 5l5 4 5-4v4l-5 4-5-4z" fill="#fff"/></svg>
    <svg width="16" height="16" viewBox="0 0 16 16"><circle cx="8" cy="8" r="8" fill="#c3202c"/><path d="M2 5h12l-2 4H4z" fill="#1b1b1b"/><path d="M5 12h6" stroke="#fff"/></svg>
    <svg width="17" height="14" viewBox="0 0 17 14" fill="none" stroke="#fff"><path d="M1 5h3l4-4v12L4 9H1zM10 5q2 2 0 4M12 3q4 4 0 8"/><path d="M14 1q5 6 0 12" stroke="#7b8b99"/></svg>
    <svg width="15" height="15" viewBox="0 0 15 15" fill="none" stroke="#dfe7ee" stroke-width="1.300"><path d="M1 13Q1 3 13 2M4 14Q4 6 13 5M7 14q0-5 6-6M10 14q0-3 3-3"/></svg>
    <svg width="15" height="14" viewBox="0 0 15 14"><path d="M0 1h15v12H0z" fill="#5f9a10"/><path d="M2 7q5-6 10 0-5 5-10 0z" fill="none" stroke="#1c3310" stroke-width="1.500"/></svg>
    <svg width="14" height="14" viewBox="0 0 14 14"><path d="M1 5h3l5-5v14L4 9H1z" fill="#d8825d"/></svg>
    <svg width="17" height="17" viewBox="0 0 17 17"><path d="M8.500 0Q13 2 16 2q1 11-7.500 15Q0 13 1 2q3 0 7.500-2z" fill="#e9f3e0"/><path d="M8.500 2q3 2 6 2 0 8-6 11Q2 12 2.500 4q3 0 6-2z" fill="#67a93a"/><path d="M10 4L6 9h2l-1 4 4-5H9z" fill="#fff"/></svg>
    <svg width="15" height="16" viewBox="0 0 15 16"><path d="M0 0h15v13H9l3 3H6V13H0z" fill="#9ba7b1"/><path d="M7.500 2v9M3.500 4.500l8 4M11.500 4.500l-8 4" stroke="#fff" stroke-width="1.700"/></svg>
    <span class="text-nowrap">中</span><span class="text-nowrap">3:12</span>
  </div>
</div>
<div class="caption">换成我们的黑色</div>

<script>
  const rows = [
    "#000000 #444444 #666666 #cccccc #d9d9d9 #ffffff",
    "#8f0000 #e60000 #f29a18 #ffff00 #00ff00 #19ffff #4a84e6 #0000f5 #9400ff #f500f5",
    "#e2b8af #efcccc #fbe5cd #fff2cc #d9ead3 #d0e0e0 #c9daf8 #cfe2ee #d5d2e5 #ead1dc #dd7e6b",
    "#e59a99 #f7cb9c #fde599 #b6d7a8 #a2c4c5 #a3c2f2 #9fc5ea #b1a7d2 #d2a6bd #cc4125 #e06666",
    "#f3b26b #f9d965 #93c47d #76a5af #6d9eeb #6fa8dc #8e7cc3 #c27ba0 #a61c00 #cc0000 #e69138",
    "#f1c232 #6aa84f #45818e #3c78d8 #3d85c6 #674ea7 #a64d79 #5b0f00 #660000 #783f04 #7f6000",
    "#274e13 #0c343d #1c4587 #073763 #20124d #4c1130",
    "#43d6a8"
  ];
  const pal = document.getElementById("pal");
  rows.forEach((r, y) => {
    const line = document.createElement("div");
    r.split(" ").forEach((c, x) => {
      const b = document.createElement("button");
      b.type = "button"; b.style.background = c; b.setAttribute("aria-label", c);
      if (y === 0 && x === 1) b.className = "hot";
      if (y === 1 && x === 2) b.innerHTML = '<svg width="16" height="16" viewBox="0 0 16 16"><path d="M1 9l2-1 2 3 9-9 1 1L6 15H4z" fill="#200"/></svg>';
      line.append(b);
    });
    pal.append(line);
  });
</script>
<script src="https://cdn.jsdelivr.net/npm/bootstrap@5.3.0/dist/js/bootstrap.bundle.min.js"></script>
</body>
</html>
